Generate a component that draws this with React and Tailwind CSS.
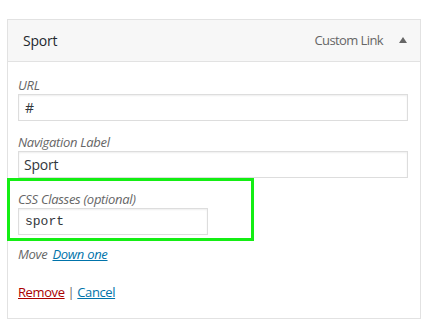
export default function App() {
  const font = { fontFamily: '"Open Sans", "Noto Sans", "Liberation Sans", sans-serif' };
  return (
    <div className="w-[428px] h-[328px] bg-white pt-[19px] pl-[7px]" style={font}>
      <div className="relative w-[414px] h-[300px] border border-[#e2e2e2] bg-white">
        <div className="h-[42px] bg-[#f7f7f7] border-b border-[#e2e2e2] flex items-center pl-[15px] pr-[13px]">
          <span className="text-[14px] text-[#23282d] tracking-[-0.2px]">Sport</span>
          <span className="ml-auto text-[13px] text-[#666] tracking-[-0.6px]">Custom Link</span>
          <svg className="ml-[16px] mb-[2px]" width="8" height="6" viewBox="0 0 8 6">
            <polygon points="4,0 8,6 0,6" fill="#666" />
          </svg>
        </div>
        <div className="pl-[10px] pt-[14px]">
          <div className="text-[13px] leading-[18px] italic text-[#666] tracking-[-0.3px]">URL</div>
          <div className="w-[390px] h-[27px] border border-[#ddd] shadow-[inset_0_1px_2px_rgba(0,0,0,0.07)] flex items-center px-[6px] text-[14px] text-[#32373c]">#</div>
          <div className="mt-[12px] text-[13px] leading-[18px] italic text-[#666] tracking-[-0.3px]">Navigation Label</div>
          <div className="w-[390px] h-[27px] border border-[#ddd] shadow-[inset_0_1px_2px_rgba(0,0,0,0.07)] flex items-center px-[5px] text-[14px] text-[#32373c] tracking-[-0.2px]">Sport</div>
          <div className="mt-[12px] text-[13px] leading-[18px] italic text-[#666] tracking-[-0.3px]">CSS Classes (optional)</div>
          <div className="w-[190px] h-[27px] border border-[#ddd] shadow-[inset_0_1px_2px_rgba(0,0,0,0.07)] flex items-center px-[6px] text-[13px] text-[#32373c]" style={{ fontFamily: '"Liberation Mono", "DejaVu Sans Mono", monospace' }}>sport</div>
          <div className="mt-[10px] text-[13px] leading-[18px] flex gap-[5px] tracking-[-0.3px]">
            <span className="italic text-[#666]">Move</span>
            <span className="italic text-[#0073aa] underline">Down one</span>
          </div>
          <div className="mt-[20px] text-[13px] leading-[18px] flex gap-[3px] tracking-[-0.4px]">
            <span className="text-[#a00] underline">Remove</span>
            <span className="text-[#666]">|</span>
            <span className="text-[#0073aa] underline">Cancel</span>
          </div>
        </div>
        <div className="absolute left-[-1px] top-[158px] w-[247px] h-[63px] border-[3px] border-[#14ee14]"></div>
      </div>
    </div>
  );
}
